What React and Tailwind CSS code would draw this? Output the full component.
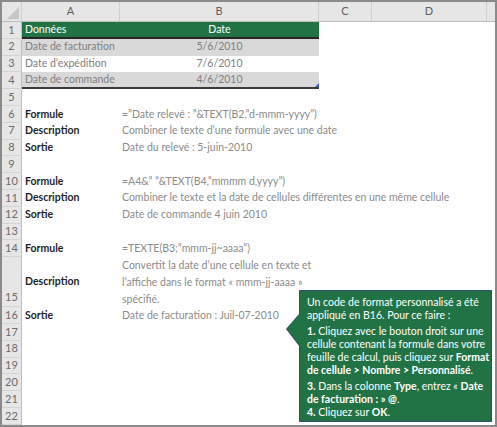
const rows = [
  { n: 1, a: "Données", b: "Date", kind: "head" },
  { n: 2, a: "Date de facturation", b: "5/6/2010", kind: "band" },
  { n: 3, a: "Date d’expédition", b: "7/6/2010", kind: "plain" },
  { n: 4, a: "Date de commande", b: "4/6/2010", kind: "last" },
  { n: 5 },
  { n: 6, a: "Formule", b: "=”Date relevé : ”&TEXT(B2,”d-mmm-yyyy”)" },
  { n: 7, a: "Description", b: "Combiner le texte d’une formule avec une date" },
  { n: 8, a: "Sortie", b: "Date du relevé : 5-juin-2010" },
  { n: 9 },
  { n: 10, a: "Formule", b: "=A4&” ”&TEXT(B4,”mmmm d,yyyy”)" },
  { n: 11, a: "Description", b: "Combiner le texte et la date de cellules différentes en une même cellule" },
  { n: 12, a: "Sortie", b: "Date de commande 4 juin 2010" },
  { n: 13 },
  { n: 14, a: "Formule", b: "=TEXTE(B3;”mmm-jj~aaaa”)" },
];

const tail = [
  { n: 16, a: "Sortie", b: "Date de facturation : Juil-07-2010" },
  { n: 17 },
  { n: 18 },
  { n: 19 },
  { n: 20 },
  { n: 21 },
  { n: 22 },
];

function RowNum({ n, bottom }) {
  return (
    <div
      className={`w-[20px] shrink-0 flex justify-center bg-[#e6e6e6] border-r border-b border-r-[#bdbdbd] border-b-[#d4d4d4] text-[11px] text-[#6b6b6b] ${
        bottom ? "items-end pb-[1px]" : "items-center"
      }`}
    >
      {n}
    </div>
  );
}

function TableRow({ r }) {
  const fill =
    r.kind === "head"
      ? "bg-[#217346] text-white border-b-2 border-[#262626]"
      : r.kind === "band"
      ? "bg-[#d9d9d9] text-[#808080]"
      : r.kind === "last"
      ? "bg-[#d9d9d9] text-[#808080] border-b-2 border-[#3a3a3a]"
      : "text-[#808080]";
  return (
    <div className="flex h-[16.8px]">
      <RowNum n={r.n} />
      <div className={`w-[98px] shrink-0 flex items-center pl-[3px] whitespace-nowrap ${fill}`}>{r.a}</div>
      <div className={`relative w-[199px] shrink-0 flex items-center justify-center whitespace-nowrap ${fill}`}>
        {r.b}
        {r.kind === "last" && (
          <svg className="absolute right-0 bottom-0" width="4" height="4" viewBox="0 0 4 4">
            <path d="M4 0 L4 4 L0 4 Z" fill="#3f5fbf" />
          </svg>
        )}
      </div>
    </div>
  );
}

function SheetRow({ r }) {
  if (r.kind) return <TableRow r={r} />;
  return (
    <div className="flex h-[16.8px]">
      <RowNum n={r.n} />
      <div className="w-[98px] shrink-0 flex items-center pl-[3px] font-bold text-[#1f1f1f] whitespace-nowrap">{r.a}</div>
      <div className="flex items-center pl-[2px] text-[#8c8c8c] whitespace-nowrap">{r.b}</div>
    </div>
  );
}

export default function App() {
  return (
    <div className="relative w-[497px] h-[427px] overflow-hidden bg-white border-2 border-[#8a8a8a] font-['Lato',sans-serif] text-[10.5px]">
      {/* column headers */}
      <div className="flex h-[20px] bg-[#e6e6e6] border-b border-[#bdbdbd] text-[11px] text-[#5e5e5e]">
        <div className="relative w-[20px] shrink-0 border-r border-[#cfcfcf]">
          <svg className="absolute right-[2px] bottom-[2px]" width="12" height="12" viewBox="0 0 12 12">
            <path d="M12 0 L12 12 L0 12 Z" fill="#c6c6c6" />
          </svg>
        </div>
        <div className="w-[98px] shrink-0 flex items-center justify-center border-r border-[#cfcfcf]">A</div>
        <div className="w-[199px] shrink-0 flex items-center justify-center border-r border-[#cfcfcf]">B</div>
        <div className="w-[53px] shrink-0 flex items-center justify-center border-r border-[#cfcfcf]">C</div>
        <div className="w-[115px] shrink-0 flex items-center justify-center border-r border-[#cfcfcf]">D</div>
        <div className="flex-1" />
      </div>

      {rows.map((r) => (
        <SheetRow key={r.n} r={r} />
      ))}

      {/* row 15, wrapped description */}
      <div className="flex h-[50px]">
        <RowNum n={15} bottom />
        <div className="w-[98px] shrink-0 flex items-center pl-[3px] font-bold text-[#1f1f1f]">Description</div>
        <div className="flex flex-col justify-center pl-[2px] text-[#8c8c8c] leading-[16.8px] whitespace-nowrap">
          <span>Convertit la date d’une cellule en texte et</span>
          <span>l’affiche dans le format « mmm-jj-aaaa »</span>
          <span>spécifié.</span>
        </div>
      </div>

      {tail.map((r) => (
        <SheetRow key={r.n} r={r} />
      ))}

      {/* callout */}
      <div className="absolute left-[283px] top-[287px] w-[208px] h-[134px]">
        <svg className="absolute inset-0" width="208" height="134" viewBox="0 0 208 134">
          <path
            d="M14.5 1.5 H206.5 V132.5 H14.5 V57 L1.5 40 L14.5 25 Z"
            fill="#217346"
            stroke="#2f4e6e"
            strokeWidth="1"
          />
        </svg>
        <div className="relative pl-[22px] pt-[7px] text-white text-[10.5px] leading-[13px] whitespace-nowrap">
          <p>Un code de format personnalisé a été</p>
          <p>appliqué en B16. Pour ce faire :</p>
          <p className="mt-[3px]">
            <b>1.</b> Cliquez avec le bouton droit sur une
          </p>
          <p>cellule contenant la formule dans votre</p>
          <p>
            feuille de calcul, puis cliquez sur <b>Format</b>
          </p>
          <p>
            <b>de cellule &gt; Nombre &gt; Personnalisé</b>.
          </p>
          <p className="mt-[3px]">
            <b>3.</b> Dans la colonne <b>Type</b>, entrez « <b>Date</b>
          </p>
          <p>
            <b>de facturation : » @</b>.
          </p>
          <p>
            <b>4.</b> Cliquez sur <b>OK</b>.
          </p>
        </div>
      </div>
    </div>
  );
}
